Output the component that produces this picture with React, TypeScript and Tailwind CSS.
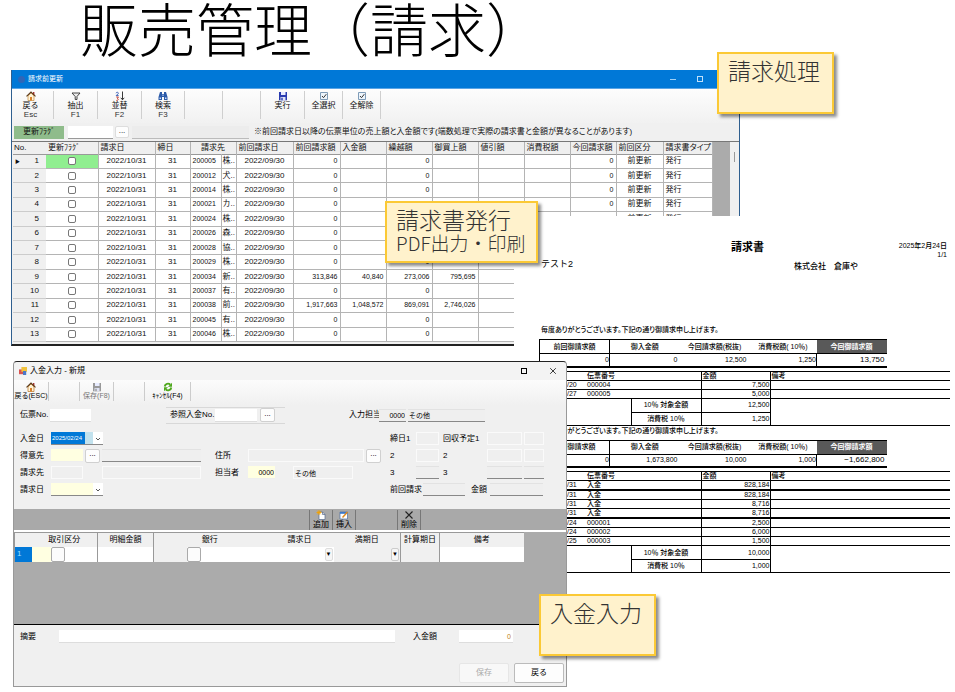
import type { ReactNode } from 'react';

const JP = "font-['Liberation_Sans','Noto_Sans_CJK_JP',sans-serif]";
const CJK = "font-['Noto_Sans_CJK_JP',sans-serif]";

/* ---------- icons ---------- */

function HouseIcon({ color = '#c98a3a' }: { color?: string }) {
  return (
    <svg viewBox="0 0 10 10" className="size-[10px]" aria-hidden="true">
      <path d="M7 1h1.4v3H7z" fill="#a33" />
      <path d="M2 5v4.5h6V5L5 2z" fill="#fff3d6" stroke={color} strokeWidth=".7" />
      <path d="M.5 5.4 5 1l4.500 4.400" fill="none" stroke="#5a3a1a" strokeWidth="1.100" />
      <path d="M4 6h2v3.500H4z" fill="#d9822b" />
    </svg>
  );
}

function FunnelIcon() {
  return (
    <svg viewBox="0 0 10 10" className="size-[10px]" aria-hidden="true">
      <path d="M1 2h8L6 5.500V8.500H4.200V5.500z" fill="#eee" stroke="#333" strokeWidth=".9" />
    </svg>
  );
}

function SortIcon() {
  return (
    <svg viewBox="0 0 10 10" className="size-[10px]" aria-hidden="true">
      <path d="M1 2.200C1.500.8 3.600 1 3.300 2.600 3.100 3.600 1.200 3.800 1.200 4.600h2.400" fill="none" stroke="#3a62b8" />
      <path d="M1.200 6h2.200c0 1-1.200 1.200-1.200 1.600 1.600 0 1.600 2-.9 1.800" fill="none" stroke="#c0392b" strokeWidth=".9" />
      <path d="M7.500.5v8M5.800 6.800l1.700 2 1.700-2" fill="none" stroke="#222" strokeWidth=".9" />
    </svg>
  );
}

function BinocularsIcon() {
  return (
    <svg viewBox="0 0 10 10" className="size-[10px]" aria-hidden="true">
      <path d="M2 1h2v2h2V1h2l1.500 5v3H6V6H4v3H.5V6z" fill="#2c5ba8" />
      <path d="M1.500 6.500h1.500V8H1.500zM7 6.500h1.500V8H7zM4.500 3.500h1v1.500h-1z" fill="#cfe0ff" />
    </svg>
  );
}

function FloppyIcon({ color = '#2a3bb0' }: { color?: string }) {
  return (
    <svg viewBox="0 0 10 10" className="size-[10px]" aria-hidden="true">
      <path d="M1 1h8v8.300H1z" fill={color} />
      <path d="M3 1h4.500v3H3z" fill="#e8ecff" />
      <path d="M2.500 6h5v3.300h-5z" fill="#dfe3f5" />
      <path d="M3.300 6.800h1.400v2.500H3.300z" fill={color} />
    </svg>
  );
}

function TickIcon() {
  return (
    <svg viewBox="0 0 10 10" className="size-[10px]" aria-hidden="true">
      <path d="M1.500 1.500h7v7h-7z" fill="#eef5fb" stroke="#7f9cb8" />
      <path d="m3 5 1.500 1.700L7.300 3.200" fill="none" stroke="#333" />
    </svg>
  );
}

function RefreshIcon() {
  return (
    <svg viewBox="0 0 10 10" className="size-[10px]" aria-hidden="true">
      <path d="M1.700 4.500A3.300 3.300 0 0 1 7.300 2.600M8.300 5.500a3.300 3.300 0 0 1-5.600 1.900" fill="none" stroke="#4fa81e" strokeWidth="1.900" />
      <path d="M9 .8v4H5zM1 9.200v-4h4z" fill="#4fa81e" />
    </svg>
  );
}

function NewPageIcon() {
  return (
    <svg viewBox="0 0 10 10" className="size-[10px]" aria-hidden="true">
      <path d="M3 2h3.500L9 4.500v5H3z" fill="#fff" stroke="#55698c" strokeWidth=".7" />
      <path d="M6.500 2v2.500H9" fill="none" stroke="#55698c" strokeWidth=".7" />
      <path d="M3 0v5M.5 2.500h5M1.200.7l3.600 3.600M4.800.7 1.200 4.300" stroke="#f5a400" strokeWidth=".9" />
    </svg>
  );
}

function EditIcon() {
  return (
    <svg viewBox="0 0 10 10" className="size-[10px]" aria-hidden="true">
      <path d="M1 2h7.500v7H1z" fill="#fff" stroke="#4a6fa5" strokeWidth=".7" />
      <path d="M1 2h7.500v1.800H1z" fill="#3c78c8" />
      <path d="m3.500 7.500 5-5.500" stroke="#e08a1e" strokeWidth="1.500" />
    </svg>
  );
}

function CrossIcon({ className = 'size-[10px]' }: { className?: string }) {
  return (
    <svg viewBox="0 0 10 10" className={className} aria-hidden="true">
      <path d="m1.500 1.500 7 7M8.500 1.500l-7 7" stroke="#222" strokeWidth="1.100" fill="none" />
    </svg>
  );
}

function Caret() {
  return (
    <svg viewBox="0 0 8 8" className="pointer-events-none absolute right-[1px] top-[3px] size-[8px]" aria-hidden="true">
      <path d="m2 3 2 2 2-2" fill="none" stroke="#444" strokeWidth=".9" />
    </svg>
  );
}

/* ---------- billing update window ---------- */

type Tool = { label: string; keyName?: string; icon?: ReactNode; width: string };

const TOOLS: Tool[] = [
  { label: '戻る', keyName: 'Esc', icon: <HouseIcon />, width: 'w-[42px] pr-[4px]' },
  { label: '抽出', keyName: 'F1', icon: <FunnelIcon />, width: 'w-[44px]' },
  { label: '並替', keyName: 'F2', icon: <SortIcon />, width: 'w-[44px]' },
  { label: '検索', keyName: 'F3', icon: <BinocularsIcon />, width: 'w-[43px]' },
  { label: '', width: 'w-[38px]' },
  { label: '', width: 'w-[38px]' },
  { label: '実行', icon: <FloppyIcon />, width: 'w-[44px]' },
  { label: '全選択', icon: <TickIcon />, width: 'w-[38px]' },
  { label: '全解除', icon: <TickIcon />, width: 'w-[38px]' },
];

const COLS = [33, 52, 57, 35, 31, 15, 57, 47, 46, 46, 46, 46, 46, 46, 47, 49];

const ROWS: [string, string, string?, string?, string?, string?][] = [
  ['200005', '株'],
  ['200012', '犬'],
  ['200014', '株'],
  ['200021', 'カ'],
  ['200024', '株'],
  ['200026', '森'],
  ['200028', '協'],
  ['200029', '株'],
  ['200034', '新', '313,846', '40,840', '273,006', '795,695'],
  ['200037', '有'],
  ['200038', '前', '1,917,663', '1,048,572', '869,091', '2,746,026'],
  ['200045', '有'],
  ['200046', '株'],
];

function BillingWindow() {
  const th = "border-r border-[#b4b4b4] px-[2px] text-left font-normal whitespace-nowrap [font-feature-settings:'palt']";
  const td = 'border-r border-b border-[#b4b4b4] p-0 whitespace-nowrap overflow-hidden';
  const num = td + ' pr-[2px] text-right text-[7px]';
  return (
    <section className={`absolute left-[11px] top-[70px] flex h-[276px] w-[729px] flex-col border-x border-b-2 border-x-[#2f5f8f] border-b-[#222] bg-[#f0f0f0] text-[8px] leading-[10px] text-[#111] ${JP}`}>
      <header className="flex h-[19px] shrink-0 items-center gap-[3px] border-b border-[#5aa5e6] bg-[#0078d7] pl-[6px] text-[7px] text-white">
        <span className="size-[7px] rounded-full bg-[#2f66b8]" />
        <h2 className="flex-1">請求前更新</h2>
        <span className="mr-[18px] h-px w-[6px] bg-[#9fd0f5]" />
        <span className="mr-[36px] size-[6px] border border-[#bfe0fa]" />
      </header>
      <div className="flex h-[34px] shrink-0 bg-linear-to-b from-[#fdfdfd] to-[#f1f1f1] pt-[2px]">
        {TOOLS.map((t, i) => (
          <div key={i} className={`flex h-[28px] shrink-0 border-r border-[#cfcfcf] ${t.width}`}>
            {t.label && (
              <button className="flex w-full flex-col items-center text-[8px] leading-[9px]">
                {t.icon}
                <span>{t.label}</span>
                {t.keyName && <span className="text-[#333]">{t.keyName}</span>}
              </button>
            )}
          </div>
        ))}
      </div>
      <div className="flex h-[18px] shrink-0 items-center pl-[2px]">
        <label htmlFor="flag" className="flex h-[13px] w-[50px] items-center justify-center bg-[#8fbc8b]">更新ﾌﾗｸﾞ</label>
        <input id="flag" className="ml-[4px] h-[13px] w-[45px] border-b border-[#999] bg-white" />
        <button aria-label="参照" className="ml-[2px] flex h-[12px] w-[14px] items-center justify-center rounded-[2px] border border-[#ddd] bg-[#fdfdfd] pb-[3px] text-[8px] leading-[7px]">...</button>
        <input aria-label="フラグ名" disabled className="ml-[3px] h-[13px] w-[117px] border-b border-[#bbb] bg-[#ececec]" />
        <p className="ml-[5px] whitespace-nowrap [font-feature-settings:'palt']">※前回請求日以降の伝票単位の売上額と入金額です(端数処理で実際の請求書と金額が異なることがあります)</p>
      </div>
      <div className="flex min-h-0 flex-1 border-t border-[#777]">
        <table className="ml-px h-[200px] w-[699px] shrink-0 table-fixed border-collapse">
          <colgroup>
            {COLS.map((w, i) => (
              <col key={i} style={{ width: w }} />
            ))}
          </colgroup>
          <thead className="bg-[#efefef]">
            <tr className="h-[12px] border-b border-[#999]">
              <th className="px-[1px] text-left font-normal">No.</th>
              <th className={th}>更新ﾌﾗｸﾞ</th>
              <th className={th}>請求日</th>
              <th className={th}>締日</th>
              <th className="border-r border-[#b4b4b4] p-0 text-center font-normal" colSpan={2}>請求先</th>
              <th className={th}>前回請求日</th>
              <th className={th}>前回請求額</th>
              <th className={th}>入金額</th>
              <th className={th}>繰越額</th>
              <th className={th}>御買上額</th>
              <th className={th}>値引額</th>
              <th className={th}>消費税額</th>
              <th className={th}>今回請求額</th>
              <th className={th}>前回区分</th>
              <th className={th}>請求書タイプ</th>
            </tr>
          </thead>
          <tbody className="bg-white">
            {ROWS.map(([code, name, a, b, c, d], i) => (
              <tr key={code}>
                <td className="border-b border-[#ccc] bg-[#f0f0f0] p-0 pr-[7px] text-right">
                  {i === 0 && <span className="float-left ml-[2px] text-[5px]">▶</span>}
                  {i + 1}
                </td>
                <td className={`${td} text-center ${i === 0 ? 'bg-[#90ee90]' : ''}`}>
                  <input type="checkbox" aria-label={`更新 ${i + 1}`} className="mx-auto block size-[8px] appearance-none rounded-[2px] border border-[#777] bg-white" />
                </td>
                <td className={td + ' text-center'}>2022/10/31</td>
                <td className={td + ' text-center'}>31</td>
                <td className={td + ' pl-[2px] text-[7px]'}>{code}</td>
                <td className={td + ' pl-[1px]'}>{name}..</td>
                <td className={td + ' text-center'}>2022/09/30</td>
                <td className={num}>{a ?? '0'}</td>
                <td className={num}>{b}</td>
                <td className={num}>{c ?? '0'}</td>
                <td className={num}>{d}</td>
                <td className={td} />
                <td className={td} />
                <td className={num}>0</td>
                <td className={td + ' text-center'}>前更新</td>
                <td className={td + ' pl-[2px]'}>発行</td>
              </tr>
            ))}
          </tbody>
        </table>
        <div className="w-[17px] bg-[#ababab]" />
        <div className="flex-1 bg-[#f0f0f0] pt-[10px]">
          <div className="mx-auto h-[10px] w-px bg-[#999]" />
        </div>
      </div>
    </section>
  );
}

/* ---------- invoice ---------- */

type InvoiceData = {
  totals: [string, string, string, string, string];
  lines: [string, string, string][];
  heavy: number[];
  base: string;
  tax: string;
};

const INVOICES: InvoiceData[] = [
  {
    totals: ['0', '0', '12,500', '1,250', '13,750'],
    lines: [['/20', '000004', '7,500'], ['/27', '000005', '5,000']],
    heavy: [],
    base: '12,500',
    tax: '1,250',
  },
  {
    totals: ['0', '1,673,800', '10,000', '1,000', '−1,662,800'],
    lines: [
      ['/31', '入金', '828,184'],
      ['/31', '入金', '828,184'],
      ['/31', '入金', '8,716'],
      ['/31', '入金', '8,716'],
      ['/24', '000001', '2,500'],
      ['/24', '000002', '6,000'],
      ['/25', '000003', '1,500'],
    ],
    heavy: [0, 3],
    base: '10,000',
    tax: '1,000',
  },
];

function InvoiceBlock({ data }: { data: InvoiceData }) {
  const v = 'border-l border-black';
  return (
    <div className="text-[7px] leading-[8px] font-medium">
      <p className="h-[14px] pl-[2px] leading-[10px] whitespace-nowrap [font-feature-settings:'palt']">毎度ありがとうございます。下記の通り御請求申し上げます。</p>
      <table className="w-[347px] table-fixed border-collapse border-t border-b-2 border-black">
        <thead>
          <tr className="h-[14px] border-b border-black whitespace-nowrap">
            <th className="w-[70px] border-x border-black p-0 font-medium">前回御請求額</th>
            <th className="w-[70px] p-0 font-medium">御入金額</th>
            <th className="w-[70px] p-0 font-medium">今回請求額(税抜)</th>
            <th className="w-[67px] p-0 font-medium">消費税額( 10％)</th>
            <th className="w-[70px] bg-[#595959] p-0 font-bold text-white">今回御請求額</th>
          </tr>
        </thead>
        <tbody>
          <tr className="h-[13px] text-right">
            <td className="border-x border-black p-0">{data.totals[0]}</td>
            <td className="p-0 pr-[2px]">{data.totals[1]}</td>
            <td className="p-0 pr-[3px]">{data.totals[2]}</td>
            <td className="border-r border-black p-0">{data.totals[3]}</td>
            <td className="p-0 pr-[2px] text-[8px]">{data.totals[4]}</td>
          </tr>
        </tbody>
      </table>
      <table className="mt-[3px] w-full table-fixed border-collapse border-y border-black">
        <colgroup>
          <col className="w-[48px]" />
          <col className="w-[44px]" />
          <col className="w-[70px]" />
          <col className="w-[69px]" />
          <col />
        </colgroup>
        <thead>
          <tr className="h-[9px] border-b border-black text-left">
            <th className="p-0" aria-label="日付" />
            <th className="p-0 font-medium" colSpan={2}>伝票番号</th>
            <th className={`p-0 pl-px font-medium ${v}`}>金額</th>
            <th className={`p-0 pl-px font-medium ${v}`}>備考</th>
          </tr>
        </thead>
        <tbody>
          {data.lines.map(([date, no, amount], i) => (
            <tr key={i} className={`h-[9px] border-black ${data.heavy.includes(i) ? 'border-b-2' : 'border-b'}`}>
              <td className="p-0 pl-[28px]">{date}</td>
              <td className="p-0" colSpan={2}>{no}</td>
              <td className={`p-0 text-right ${v}`}>{amount}</td>
              <td className={`p-0 ${v}`} />
            </tr>
          ))}
          <tr className="h-[14px]">
            <td colSpan={2} rowSpan={2} className="p-0" />
            <td className={`border-b p-0 text-center ${v}`}>10％ 対象金額</td>
            <td className={`border-b p-0 text-right ${v}`}>{data.base}</td>
            <td rowSpan={2} className={`p-0 ${v}`} />
          </tr>
          <tr className="h-[13px]">
            <td className={`p-0 text-center ${v}`}>消費税 10％</td>
            <td className={`p-0 text-right ${v}`}>{data.tax}</td>
          </tr>
        </tbody>
      </table>
    </div>
  );
}

function Invoice() {
  return (
    <section className={`absolute left-[514px] right-0 top-[216px] bg-white pl-[25px] pr-[5px] pt-[25px] text-black ${JP}`}>
      <div className="flex h-[84px]">
        <div className="w-[192px] pl-[2px] pt-[17px] text-[9px] leading-[13px]">テスト2</div>
        <div>
          <h2 className="text-[11px] leading-[13px] font-bold">請求書</h2>
          <div className="pl-[63px] pt-[7px] text-[8px] leading-[12px] font-medium whitespace-nowrap">株式会社　倉庫や</div>
        </div>
        <div className="ml-auto flex flex-col items-end pr-[3px] text-[7px] leading-[9px] font-medium whitespace-nowrap">
          <span>2025年2月24日</span>
          <span>1/1</span>
        </div>
      </div>
      <div className="flex flex-col">
        {INVOICES.map((d, i) => (
          <InvoiceBlock key={i} data={d} />
        ))}
      </div>
    </section>
  );
}

/* ---------- deposit entry window ---------- */

function Field({ id, label, w, labelW, tone = 'plain', value }: { id: string; label?: string; w: string; labelW?: string; tone?: 'plain' | 'white' | 'yellow' | 'line'; value?: string }) {
  const tones = {
    plain: 'border border-[#fafafa] bg-[#efefef]',
    white: 'border-b border-[#ddd] bg-white',
    yellow: 'border-b border-[#eee] bg-[#ffffe1]',
    line: 'border-t border-b border-t-[#e2e2e2] border-b-[#888] bg-[#efefef]',
  };
  return (
    <>
      {label && <label htmlFor={id} className={`shrink-0 whitespace-nowrap ${labelW}`}>{label}</label>}
      <input id={id} aria-label={label ? undefined : id} defaultValue={value} className={`h-[13px] shrink-0 px-[1px] text-[7px] leading-[10px] ${value === '0000' ? 'text-right' : ''} ${w} ${tones[tone]}`} />
    </>
  );
}

function Dots() {
  return <button aria-label="参照" className="flex h-[14px] w-[15px] shrink-0 items-center justify-center rounded-[2px] border border-[#d0d0d0] bg-[#fdfdfd] pb-[3px] text-[8px] leading-[8px]">...</button>;
}

function StripButton({ icon, label }: { icon: ReactNode; label: string }) {
  return (
    <button className="flex w-[23px] flex-col items-center border-r border-[#777] text-[8px] leading-[9px] whitespace-nowrap">
      {icon}
      {label}
    </button>
  );
}

function Schedule({ n }: { n: 1 | 2 | 3 }) {
  const tone = n === 3 ? 'line' : 'plain';
  return (
    <div className="flex items-center">
      <Field id={`締日${n}`} label={n === 1 ? '締日1' : String(n)} labelW="w-[26px]" w="w-[23px]" tone={tone} />
      <span className="w-[4px]" />
      <Field id={`回収予定${n}`} label={n === 1 ? '回収予定1' : String(n)} labelW="w-[44px]" w="w-[35px]" tone={tone} />
      <span className="w-[2px]" />
      <Field id={`回収日${n}`} w="w-[20px]" tone={tone} />
    </div>
  );
}

function DepositWindow() {
  const gth = 'border-r border-[#999] p-0 font-normal';
  return (
    <section className={`absolute left-[13px] top-[361px] flex h-[326px] w-[554px] flex-col rounded-t-[4px] border border-[#999] border-t-[#222] bg-[#f0f0f0] text-[8px] leading-[10px] text-black ${JP}`}>
      <header className="flex h-[18px] shrink-0 items-center rounded-t-[4px] bg-[#f3f3f3] pl-[5px]">
        <svg viewBox="0 0 10 10" className="mr-[3px] size-[8px]" aria-hidden="true">
          <path d="M0 3h5v6H0z" fill="#d9534f" />
          <path d="M3 0h7v6H3z" fill="#f0c23c" />
          <path d="M5 5h4v5H5z" fill="#4a78c8" />
        </svg>
        <h2 className="flex-1">入金入力 - 新規</h2>
        <span className="mr-[22px] size-[6px] border border-black" />
        <CrossIcon className="mr-[9px] size-[8px]" />
      </header>
      <div className="flex h-[25px] shrink-0 bg-linear-to-b from-[#fcfcfc] to-[#f0f0f0] pt-[2px] text-[7px] leading-[8px]">
        <button className="flex h-[19px] w-[35px] flex-col items-center border-r border-[#ccc] whitespace-nowrap"><HouseIcon color="#b8711f" />戻る(ESC)</button>
        <span className="h-[19px] w-[31px] border-r border-[#ccc]" />
        <button className="flex h-[19px] w-[34px] flex-col items-center border-r border-[#ccc] whitespace-nowrap text-[#777]"><FloppyIcon color="#999" />保存(F8)</button>
        <span className="h-[19px] w-[31px] border-r border-[#ccc]" />
        <button className="flex h-[19px] w-[46px] flex-col items-center border-r border-[#ccc] whitespace-nowrap"><RefreshIcon />ｷｬﾝｾﾙ(F4)</button>
      </div>
      <form className="flex h-[104px] shrink-0 flex-col pl-[6px]">
        <div className="flex h-[20px] items-center">
          <Field id="slip" label="伝票No." labelW="w-[30px]" w="w-[41px]" tone="white" />
          <div className="ml-[75px] flex h-[17px] w-[119px] items-center gap-[3px] border-y border-[#d8d8d8] pl-[4px]">
            <Field id="ref" label="参照入金No." labelW="w-[42px]" w="w-[42px]" tone="white" />
            <Dots />
          </div>
          <div className="ml-[64px] flex items-center gap-[2px]">
            <Field id="staff" label="入力担当" labelW="w-[28px]" w="w-[27px]" tone="line" value="0000" />
            <Field id="担当者名" w="w-[77px]" tone="line" value="その他" />
          </div>
        </div>
        <div className="mt-[5px] grid auto-rows-[17px] grid-cols-[195px_175px_1fr] items-center">
          <div className="flex items-center">
            <label htmlFor="day" className="w-[31px]">入金日</label>
            <div className="relative">
              <select id="day" className="block h-[13px] w-[52px] appearance-none border-b border-[#888] bg-[linear-gradient(90deg,#0078d7_34px,#c2e2ee_34px,#c2e2ee_42px,#fff_42px)] pl-px text-[6px] leading-[10px] text-white">
                <option>2025/02/24</option>
              </select>
              <Caret />
            </div>
          </div>
          <div />
          <Schedule n={1} />
          <div className="flex items-center">
            <Field id="customer" label="得意先" labelW="w-[31px]" w="w-[32px]" tone="yellow" />
            <span className="w-[2px]" />
            <Dots />
            <span className="w-[2px]" />
            <Field id="得意先名" w="w-[99px]" tone="line" />
          </div>
          <div className="flex items-center">
            <Field id="address" label="住所" labelW="w-[33px]" w="w-[116px]" />
            <span className="w-[2px]" />
            <Dots />
          </div>
          <Schedule n={2} />
          <div className="flex items-center">
            <Field id="bill" label="請求先" labelW="w-[31px]" w="w-[32px]" />
            <span className="w-[19px]" />
            <Field id="請求先名" w="w-[99px]" />
          </div>
          <div className="flex items-center">
            <Field id="person" label="担当者" labelW="w-[33px]" w="w-[27px]" tone="yellow" value="0000" />
            <span className="w-[18px]" />
            <Field id="担当名" w="w-[60px]" value="その他" />
          </div>
          <Schedule n={3} />
          <div className="flex items-center">
            <label htmlFor="billday" className="w-[31px]">請求日</label>
            <div className="relative">
              <select id="billday" className="block h-[13px] w-[52px] appearance-none border-b border-[#888] bg-[linear-gradient(90deg,#ffffe1_42px,#fff_42px)]">
                <option></option>
              </select>
              <Caret />
            </div>
          </div>
          <div />
          <div className="flex items-center">
            <Field id="prev" label="前回請求" labelW="w-[33px]" w="w-[42px]" tone="line" />
            <span className="w-[6px]" />
            <Field id="amount" label="金額" labelW="w-[19px]" w="w-[53px]" tone="line" />
          </div>
        </div>
      </form>
      <div className="flex h-[21px] shrink-0 bg-[#a9a9a9] pl-[295px] pt-px">
        <div className="flex border-l border-[#777]">
          <StripButton icon={<NewPageIcon />} label="追加" />
          <StripButton icon={<EditIcon />} label="挿入" />
          <span className="w-[42px] border-r border-[#777]" />
          <StripButton icon={<CrossIcon />} label="削除" />
        </div>
      </div>
      <div className="h-[95px] shrink-0 border-t-2 border-b border-t-white border-b-black bg-[#ababab]">
        <table className="w-[509px] table-fixed border-collapse border-t border-l border-[#999]">
          <colgroup>
            <col className="w-[17px]" />
            <col className="w-[66px]" />
            <col className="w-[56px]" />
            <col className="w-[112px]" />
            <col className="w-[68px]" />
            <col className="w-[67px]" />
            <col className="w-[39px]" />
            <col className="w-[84px]" />
          </colgroup>
          <thead className="bg-[#f0f0f0]">
            <tr className="h-[14px]">
              <th className="p-0" aria-label="行" />
              <th className={gth}>取引区分</th>
              <th className={gth}>明細金額</th>
              <th className="p-0 font-normal">銀行</th>
              <th className="p-0 font-normal">請求日</th>
              <th className={gth}>満期日</th>
              <th className={gth}>計算期日</th>
              <th className="p-0 font-normal">備考</th>
            </tr>
          </thead>
          <tbody>
            <tr className="h-[15px] bg-white">
              <td className="bg-[#0078d7] p-0 pl-[2px] text-[#9fe0ff]">1</td>
              <td className="border-r border-[#999] p-0">
                <div className="flex h-[15px]">
                  <span className="w-[19px] bg-[#ffffe1]" />
                  <button aria-label="取引区分を選択" className="w-[14px] rounded-[2px] border border-[#aaa] bg-[#fcfcfc]" />
                </div>
              </td>
              <td className="border-r border-[#999] p-0" />
              <td className="p-0">
                <div className="flex h-[15px]">
                  <span className="w-[33px] bg-[#f0f0f0]" />
                  <button aria-label="銀行を選択" className="w-[14px] rounded-[2px] border border-[#aaa] bg-[#fcfcfc]" />
                </div>
              </td>
              <td className="p-0">
                <button aria-label="請求日を選択" className="mr-[1px] ml-auto flex h-[13px] w-[8px] items-center justify-center rounded-[2px] border border-[#ddd] bg-[#f6f6f6] text-[6px] leading-[6px]">▼</button>
              </td>
              <td className="border-r border-[#999] bg-[#f0f0f0] p-0">
                <button aria-label="満期日を選択" className="mr-[1px] ml-auto flex h-[13px] w-[8px] items-center justify-center rounded-[2px] border border-[#ccc] bg-[#f6f6f6] text-[6px] leading-[6px]">▼</button>
              </td>
              <td className="border-r border-[#999] bg-[#f0f0f0] p-0" />
              <td className="p-0" />
            </tr>
          </tbody>
        </table>
      </div>
      <footer className="flex flex-1 flex-col justify-between pt-[5px] pr-[2px] pb-[3px] pl-[6px]">
        <div className="flex items-center">
          <Field id="memo" label="摘要" labelW="w-[39px]" w="w-[336px]" tone="white" />
          <label htmlFor="total" className="ml-[18px] w-[46px]">入金額</label>
          <input id="total" defaultValue="0" className="h-[13px] w-[54px] border-b border-[#ddd] bg-white pr-[2px] text-right text-[7px] text-[#c08020]" />
        </div>
        <div className="flex justify-end gap-[5px]">
          <button disabled className="h-[20px] w-[50px] rounded-[2px] border border-[#e6e6e6] bg-[#f8f8f8] text-[#aaa]">保存</button>
          <button className="h-[20px] w-[50px] rounded-[2px] border border-[#bbb] bg-[#fdfdfd]">戻る</button>
        </div>
      </footer>
    </section>
  );
}

/* ---------- slide ---------- */

function Note({ place, children }: { place: string; children: ReactNode }) {
  return (
    <aside className={`absolute h-[62px] border-2 border-[#fbc935] bg-[#fff2cc] font-light text-[#333] shadow-[3px_3px_3px_rgba(0,0,0,0.45)] ${CJK} ${place}`}>
      {children}
    </aside>
  );
}

export default function App() {
  return (
    <main lang="ja" className="relative min-h-[692px] w-full overflow-hidden bg-white">
      <h1 className={`pl-[80px] text-[58px] leading-[54px] font-light whitespace-nowrap text-black ${CJK}`}>販売管理（請求）</h1>
      <BillingWindow />
      <Invoice />
      <DepositWindow />
      <Note place="left-[717px] top-[52px] w-[117px]">
        <p className="pl-[9px] text-[23px] leading-[32px]">請求処理</p>
      </Note>
      <Note place="left-[385px] top-[201px] w-[153px]">
        <p className="pl-[9px] text-[23px] leading-[32px]">請求書発行</p>
        <p className="pl-[9px] text-[19px] leading-[16px]">PDF出力・印刷</p>
      </Note>
      <Note place="left-[539px] top-[594px] w-[117px]">
        <p className="pl-[9px] text-[23px] leading-[32px]">入金入力</p>
      </Note>
    </main>
  );
}
